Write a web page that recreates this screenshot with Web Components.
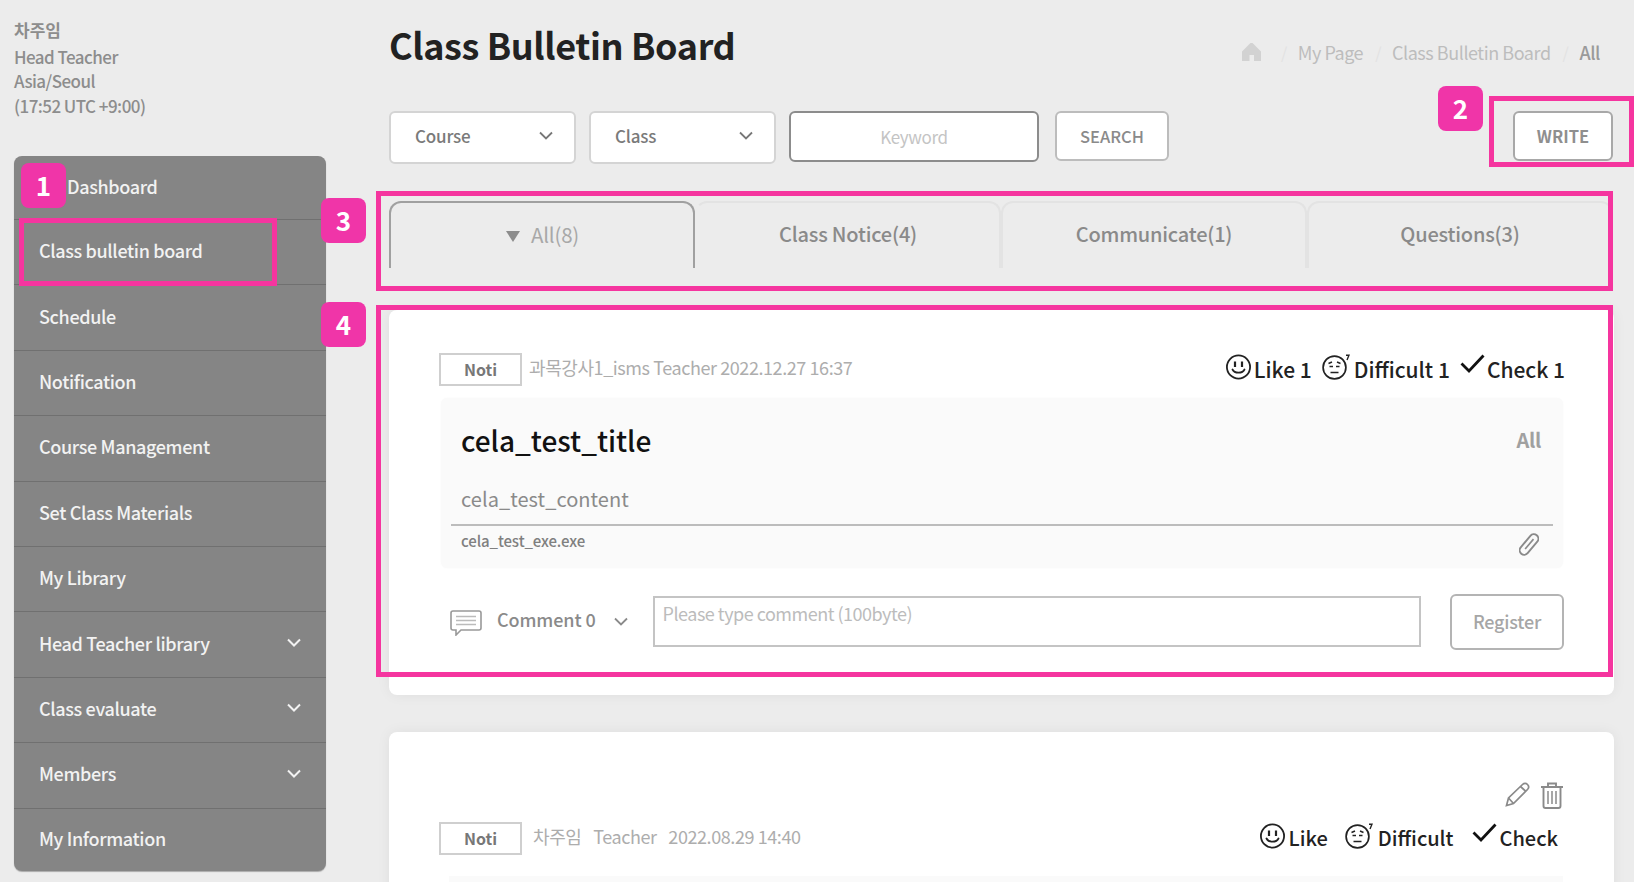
<!DOCTYPE html>
<html lang="en">
<head>
<meta charset="utf-8">
<title>Class Bulletin Board</title>
<style>
html,body{margin:0;height:882px;overflow:hidden;background:#ececec;font-family:"Noto Sans CJK KR","Noto Sans",sans-serif;}
</style>
</head>
<body>
<x-app>
  <x-sidebar slot="side">
    <x-user-info></x-user-info>
    <x-side-menu>
      <x-menu-item inset>Dashboard</x-menu-item>
      <x-menu-item>Class bulletin board</x-menu-item>
      <x-menu-item>Schedule</x-menu-item>
      <x-menu-item>Notification</x-menu-item>
      <x-menu-item>Course Management</x-menu-item>
      <x-menu-item>Set Class Materials</x-menu-item>
      <x-menu-item>My Library</x-menu-item>
      <x-menu-item chev>Head Teacher library</x-menu-item>
      <x-menu-item chev>Class evaluate</x-menu-item>
      <x-menu-item chev>Members</x-menu-item>
      <x-menu-item>My Information</x-menu-item>
    </x-side-menu>
  </x-sidebar>
  <x-page-head></x-page-head>
  <x-filter-bar></x-filter-bar>
  <x-tabs></x-tabs>
  <x-post-card first kind="Noti" author="과목강사1_isms Teacher 2022.12.27 16:37" counts="1"></x-post-card>
  <x-post-card kind="Noti" author="차주임&#8194;&#8201;Teacher&#8194;&#8201;2022.08.29 14:40"></x-post-card>

  <x-highlight slot="over" style="left:19px;top:218px;width:258px;height:68px"></x-highlight>
  <x-highlight slot="over" style="left:1489px;top:96px;width:145px;height:71px"></x-highlight>
  <x-highlight slot="over" style="left:376px;top:191px;width:1237px;height:100px"></x-highlight>
  <x-highlight slot="over" style="left:376px;top:305px;width:1237px;height:372px"></x-highlight>
  <x-num-badge slot="over" style="left:21px;top:163px">1</x-num-badge>
  <x-num-badge slot="over" style="left:1438px;top:86px">2</x-num-badge>
  <x-num-badge slot="over" style="left:321px;top:198px">3</x-num-badge>
  <x-num-badge slot="over" style="left:321px;top:302px">4</x-num-badge>
</x-app>

<script>
const FONT = '"Noto Sans CJK KR","Noto Sans",sans-serif';
const ICONS = {
  chev: (c,w)=>`<svg width="14" height="9" viewBox="0 0 14 9" fill="none" stroke="${c}" stroke-width="${w}"><path d="M1 1.5 7 7.5 13 1.5"/></svg>`,
  smile: `<svg width="25" height="26" viewBox="0 0 25 26" fill="none" stroke="#222" stroke-width="1.8"><circle cx="12.5" cy="13" r="11.6"/><path d="M9 7.5v5.5M16 7.5v5.5" stroke-width="2.2"/><path d="M6.5 15.5c2 4.2 10 4.2 12 0" stroke-linecap="round"/></svg>`,
  hard: `<svg width="28" height="26" viewBox="0 0 28 26" fill="none" stroke="#222" stroke-width="1.7"><circle cx="12.5" cy="13.5" r="11.4"/><path d="M6.5 9.5 10 8M15 8l3.5 1.5M7.5 12.5h3.500M14 12.500h3.500M8.500 18.500h8" stroke-width="1.5"/><path d="M24 1.2h3L25 6" stroke-width="1.4"/></svg>`,
  check: `<svg width="25" height="20" viewBox="0 0 25 20" fill="none" stroke="#111" stroke-width="2.8"><path d="M1.5 9.5 9 17 23.5 1.5"/></svg>`,
  clip: `<svg width="20" height="23" viewBox="0 0 20 23" fill="none" stroke="#8a8a8a" stroke-width="1.9"><g transform="rotate(40 10 11.5)"><rect x="5.500" y="-.5" width="9" height="24" rx="4.5"/><path d="M10 4.5v13" stroke-width="1.6"/></g></svg>`,
  bubble: `<svg width="32" height="26" viewBox="0 0 32 26" fill="none" stroke="#999" stroke-width="1.6"><path d="M3 1h26a2 2 0 0 1 2 2v15a2 2 0 0 1-2 2H11l-5 5v-5H3a2 2 0 0 1-2-2V3a2 2 0 0 1 2-2z"/><path d="M6 6.5h20M6 10.5h20M6 14.5h20" stroke="#bbb" stroke-width="1.4"/></svg>`,
  pencil: `<svg width="26" height="25" viewBox="0 0 26 25" fill="none" stroke="#8a8a8a" stroke-width="1.7"><path d="M1.5 23.5 3.5 16 17.5 2.5c1.6-1.5 3.6-1.5 5 0s1.5 3.5 0 5L8.5 21.5z"/><path d="M3.5 16l5 5.5M15.5 4.5l5.5 5"/></svg>`,
  trash: `<svg width="24" height="27" viewBox="0 0 24 27" fill="none" stroke="#8a8a8a" stroke-width="1.9"><path d="M1 5h22M8 5V1.5h8V5M3.5 5v19a2 2 0 0 0 2 2h13a2 2 0 0 0 2-2V5"/><path d="M8 9v13M12 9v13M16 9v13" stroke-width="1.5"/></svg>`,
  home: `<svg width="19" height="18" viewBox="0 0 19 18" fill="#d2d2d2"><path d="M9.5 0c1 0 1.6.5 2.3 1.2L19 8.5V18h-7v-6H7.500v6H0V8.500l7.200-7.300C7.900.5 8.500 0 9.500 0z"/></svg>`,
};

function el(name, render){
  customElements.define(name, class extends HTMLElement{
    constructor(){super();this.attachShadow({mode:'open'});}
    connectedCallback(){this.shadowRoot.innerHTML = render(this);}
  });
}

el('x-app', ()=>`<style>
  :host{display:grid;grid-template-columns:389px 1225px;width:1634px;height:882px;overflow:hidden;position:relative;font-family:${FONT};}
  .side,.main{display:block;}
</style>
<div class="side"><slot name="side"></slot></div>
<div class="main"><slot></slot></div>
<slot name="over"></slot>`);

el('x-sidebar', ()=>`<style>:host{display:block;padding:18px 0 0 14px;}</style><slot></slot>`);

el('x-user-info', ()=>`<style>
  :host{display:block;height:138px;color:#8d8d8d;font-size:17px;line-height:24.5px;font-weight:500}
  b{display:block;font-weight:700;margin-bottom:2px}
  div{letter-spacing:-.55px}
</style><b>차주임</b><div>Head Teacher</div><div>Asia/Seoul</div><div>(17:52 UTC +9:00)</div>`);

el('x-side-menu', ()=>`<style>
  :host{display:grid;grid-template-rows:63px repeat(9,65.4px) 63px;width:312px;background:#858585;border-radius:8px;overflow:hidden;box-shadow:0 1px 1px #aaa;}
</style><slot></slot>`);

el('x-menu-item', h=>`<style>
  :host{display:flex;align-items:center;justify-content:space-between;box-sizing:border-box;border-top:1px solid #707070;padding:0 25px 4px ${h.hasAttribute('inset')?53:25}px;color:#f2f2f2;font-size:18px;font-weight:500;letter-spacing:-.35px;}
  :host(:first-child){border-top:0}
  svg{display:block}
</style><span><slot></slot></span>${h.hasAttribute('chev')?ICONS.chev('#f2f2f2',2):''}`);

el('x-page-head', ()=>`<style>
  :host{display:flex;justify-content:space-between;height:92px;box-sizing:border-box;}
  h1{margin:18px 0 0;font-size:36px;line-height:52px;font-weight:700;color:#222;letter-spacing:-.4px}
  nav{display:flex;align-items:center;gap:0;height:30px;margin:37px 14px 0 0;color:#bdbdbd;font-size:18px;letter-spacing:-.45px}
  i{font-style:normal;color:#e2e2e2;margin:0 11px 0 12px;font-size:16px}
  .home{display:block;margin:-6px 10px 0 0;height:18px}
  b{font-weight:500;color:#9a9a9a}
</style><h1>Class Bulletin Board</h1>
<nav><span class="home">${ICONS.home}</span><i style="margin-left:10px">/</i><span>My Page</span><i>/</i><span>Class Bulletin Board</span><i>/</i><b>All</b></nav>`);

el('x-filter-bar', ()=>`<style>
  :host{display:flex;align-items:flex-start;height:89px;padding-top:19px;box-sizing:border-box;padding-right:1px;margin-top:0}
  .sel{box-sizing:border-box;width:187px;height:53px;margin:0 13px 0 0;background:#fff;border:2px solid #d4d4d4;border-radius:6px;display:flex;align-items:center;justify-content:space-between;padding:0 21px 4px 24px;color:#7a7a7a;font-size:17px;font-weight:500;letter-spacing:-.2px}
  .key{box-sizing:border-box;width:250px;height:51px;background:#fff;border:2px solid #8c8c8c;border-radius:6px;color:#c4c4c4;font-size:17px;text-align:center;line-height:47px;letter-spacing:-.35px}
  .btn{box-sizing:border-box;height:50px;background:#fff;border:2px solid #bcbcbc;border-radius:6px;color:#8a8a8a;font-size:16.5px;font-weight:500;text-align:center;line-height:46px}
  .s{width:114px;margin-left:16px}
  .w{width:100px;margin-left:auto;border-color:#a8a8a8;color:#8f8f8f;font-weight:700}
</style>
<div class="sel"><span>Course</span>${ICONS.chev('#777',1.8)}</div>
<div class="sel"><span>Class</span>${ICONS.chev('#777',1.8)}</div>
<div class="key">Keyword</div><div class="btn s">SEARCH</div><div class="btn w">WRITE</div>`);

el('x-tabs', ()=>`<style>
  :host{display:grid;grid-template-columns:repeat(4,306px);height:67px;margin-top:20px;color:#8a8a8a;font-size:20px;font-weight:500;letter-spacing:-.2px}
  div{box-sizing:border-box;border:2px solid #e3e3e3;border-bottom:0;border-radius:12px 12px 0 0;display:flex;align-items:center;justify-content:center;padding-bottom:4px}
  .on{border-color:#a0a0a0;color:#a8a8a8;font-weight:400;gap:11px;font-size:20.5px;padding-left:4px}
  .on svg{margin-top:6px;margin-left:-3px}
  div+div{border-left-color:transparent}
  div+div+div{border-left-color:#e3e3e3}
</style>
<div class="on"><svg width="14" height="11" viewBox="0 0 14 11" fill="#8c8c8c"><path d="M0 0h14L7 11z"/></svg><span>All(8)</span></div>
<div>Class Notice(4)</div><div>Communicate(1)</div><div>Questions(3)</div>`);

el('x-post-card', h=>{
  const first = h.hasAttribute('first');
  const n = h.getAttribute('counts');
  const c = n ? ' '+n : '';
  const reactions = `<div class="react ${first?'r1':'r2'}">
      <span class="ic i1">${ICONS.smile}</span><span>Like${c}</span>
      <span class="ic i2">${ICONS.hard}</span><span>Difficult${c}</span>
      <span class="ic i3">${ICONS.check}</span><span>Check${c}</span>
    </div>`;
  return `<style>
  :host{display:block;box-sizing:border-box;background:#fff;border-radius:8px;box-shadow:0 0 14px rgba(0,0,0,.06);padding:0 51px 0 50px;${first?'height:385px;padding-top:43px;margin-top:42px;':'height:240px;padding-top:50px;margin-top:37px;'}}
  .tools{display:flex;justify-content:flex-end;gap:9px;height:25px;margin:0 -1px 15px 0;align-items:flex-start}
  .tools svg{display:block}
  .top{display:flex;align-items:flex-start;height:45px}
  .tag{box-sizing:border-box;width:83px;height:33px;border:2px solid #cfcfcf;text-align:center;line-height:29px;font-size:16px;font-weight:700;color:#777}
  .meta{margin:0 0 0 ${first?7:11}px;color:#adadad;font-size:18px;line-height:28px;letter-spacing:-.42px;white-space:pre}
  .react{margin-left:auto;display:flex;align-items:flex-start;color:#222;font-weight:500;line-height:32px}
  .react span{display:block}
  .ic svg{display:block}
  .r1{font-size:21px;margin-right:-2px}
  .r1 .i1{margin:1px 3px 0 0}.r1 .i2{margin:1px 4px 0 10px}.r1 .i3{margin:1px 2px 0 10px}
  .r2{font-size:20px;margin-right:5px}
  .r2 .i1{margin:1px 4px 0 0}.r2 .i2{margin:1px 5px 0 17px}.r2 .i3{margin:1px 3px 0 18px}
  .box{background:#fafafa;border-radius:6px;margin:0 0 0 2px;height:170px;box-sizing:border-box;padding:0 10px;box-shadow:0 0 2px rgba(0,0,0,.03)}
  .h{display:flex;justify-content:space-between;align-items:center;padding:19px 12px 0 10px;height:64px;box-sizing:border-box}
  .h b{font-weight:500;font-size:28px;color:#111;letter-spacing:0}
  .h span{font-size:20px;font-weight:700;color:#a0a0a0;letter-spacing:-.3px}
  .txt{padding:22px 10px 0;height:64px;box-sizing:border-box;border-bottom:2px solid #bcbcbc;font-size:20px;color:#8a8a8a;line-height:30px;letter-spacing:.05px}
  .file{display:flex;justify-content:space-between;padding:3px 14px 0 10px;font-size:15px;font-weight:500;color:#808080;letter-spacing:-.1px;line-height:24px}
  .file svg{display:block;margin-top:4px}
  .cm{display:flex;align-items:flex-start;height:56px;margin-top:27px;margin-left:11px}
  .cm .bub{margin-top:15px;display:block}
  .cm .lab{margin:8px 0 0 15px;font-size:18px;font-weight:500;color:#8a8a8a;line-height:32px;letter-spacing:-.1px}
  .cm .ch{margin:22px 0 0 18px;display:block}
  .cm .ch svg{display:block}
  .inp{box-sizing:border-box;width:768px;height:51px;margin:1px 0 0 25px;border:2px solid #c4c4c4;background:#fff;color:#bcbcbc;font-size:18px;line-height:28px;padding:1px 8px;letter-spacing:-.5px}
  .reg{box-sizing:border-box;width:114px;height:56px;margin:-1px -1px 0 auto;border:2px solid #b4b4b4;border-radius:6px;color:#a6a6a6;font-size:18px;font-weight:500;text-align:center;line-height:50px;letter-spacing:-.2px}
  .stub{background:#fafafa;height:20px;margin:9px 0 0 10px}
  </style>
  ${first?'':`<div class="tools">${ICONS.pencil}${ICONS.trash}</div>`}
  <div class="top"><div class="tag">${h.getAttribute('kind')}</div><div class="meta">${h.getAttribute('author')}</div>${reactions}</div>
  ${first?`<div class="box">
    <div class="h"><b>cela_test_title</b><span>All</span></div>
    <div class="txt">cela_test_content</div>
    <div class="file"><span>cela_test_exe.exe</span>${ICONS.clip}</div>
  </div>
  <div class="cm"><span class="bub">${ICONS.bubble}</span><span class="lab">Comment 0</span><span class="ch">${ICONS.chev('#8a8a8a',1.8)}</span>
    <div class="inp">Please type comment (100byte)</div><div class="reg">Register</div></div>`:`<div class="stub"></div>`}`;
});

el('x-highlight', ()=>`<style>:host{display:block;position:absolute;box-sizing:border-box;border:5px solid #f5359f;pointer-events:none}</style>`);
el('x-num-badge', ()=>`<style>:host{display:flex;position:absolute;box-sizing:border-box;width:45px;height:45px;padding-bottom:2px;align-items:center;justify-content:center;background:#f035a8;border-radius:8px;color:#fff;font-size:26px;font-weight:700;line-height:1}</style><slot></slot>`);
</script>
</body>
</html>
